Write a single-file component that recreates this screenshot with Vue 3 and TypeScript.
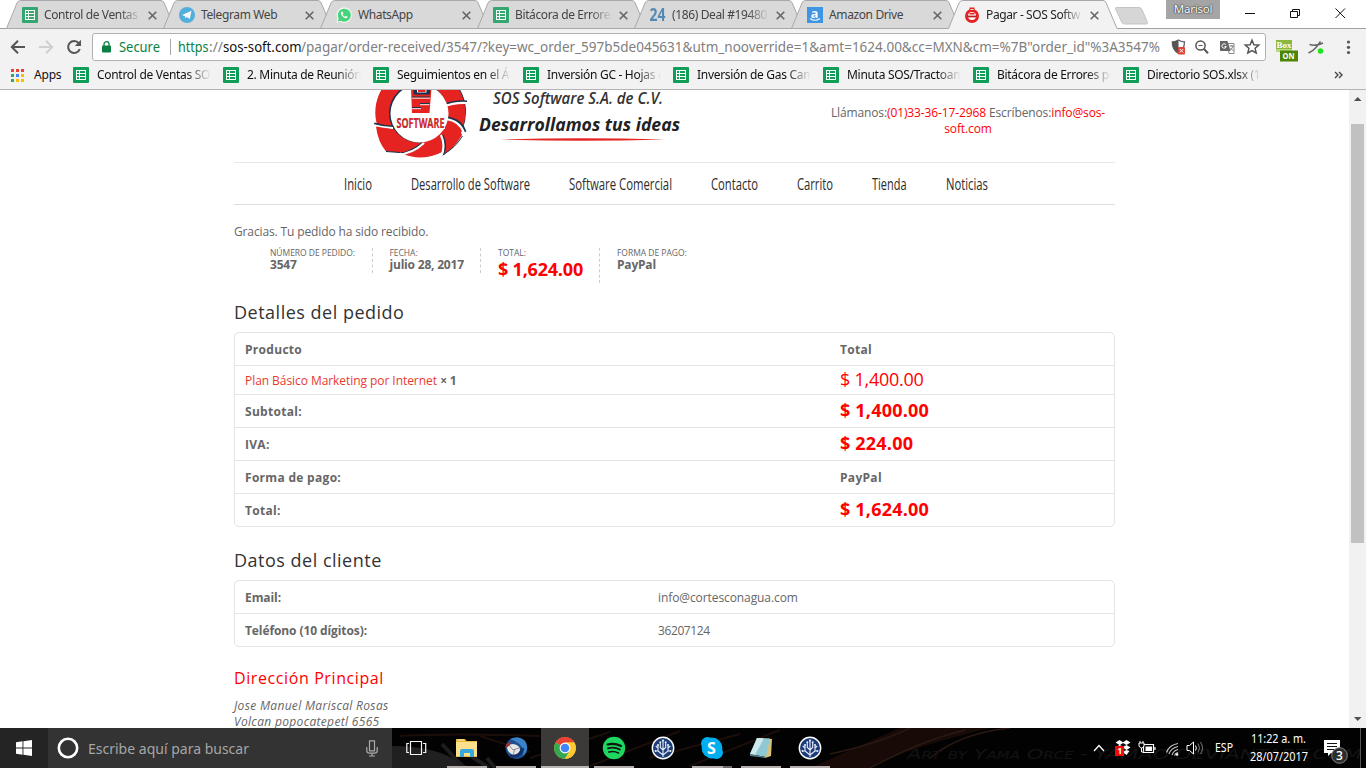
<script setup lang="ts">
import { h } from 'vue'

interface Tab { title: string; icon: string; active?: boolean; fade?: boolean }

const tabs: Tab[] = [
  { title: 'Control de Ventas', icon: 'sheet', fade: true },
  { title: 'Telegram Web', icon: 'telegram' },
  { title: 'WhatsApp', icon: 'whatsapp' },
  { title: 'Bitácora de Errores', icon: 'sheet', fade: true },
  { title: '(186) Deal #19480', icon: 'b24', fade: true },
  { title: 'Amazon Drive', icon: 'amazon' },
  { title: 'Pagar - SOS Softw', icon: 'sos', active: true, fade: true },
]

const bookmarks: string[] = [
  'Control de Ventas SO',
  '2. Minuta de Reunión',
  'Seguimientos en el Á',
  'Inversión GC - Hojas d',
  'Inversión de Gas Cam',
  'Minuta SOS/Tractoan',
  'Bitácora de Errores po',
  'Directorio SOS.xlsx (1',
]

const nav: { label: string; w: number }[] = [
  { label: 'Inicio', w: 28 },
  { label: 'Desarrollo de Software', w: 119 },
  { label: 'Software Comercial', w: 103 },
  { label: 'Contacto', w: 47 },
  { label: 'Carrito', w: 36 },
  { label: 'Tienda', w: 34.5 },
  { label: 'Noticias', w: 42 },
]

const summary = [
  { label: 'Número de pedido:', value: '3547', w: 85.5 },
  { label: 'Fecha:', value: 'julio 28, 2017', w: 74.5 },
  { label: 'Total:', value: '$ 1,624.00', w: 85, money: true },
  { label: 'Forma de pago:', value: 'PayPal', w: 72 },
]

const totals = [
  { label: 'Subtotal:', value: '$ 1,400.00', money: true },
  { label: 'IVA:', value: '$ 224.00', money: true },
  { label: 'Forma de pago:', value: 'PayPal', money: false },
  { label: 'Total:', value: '$ 1,624.00', money: true },
]

const apps: { icon: string; state: string }[] = [
  { icon: 'explorer', state: 'open' },
  { icon: 'thunderbird', state: 'open' },
  { icon: 'chrome', state: 'active' },
  { icon: 'spotify', state: 'open' },
  { icon: 'tree', state: '' },
  { icon: 'skype', state: 'open multi' },
  { icon: 'notes', state: 'open' },
  { icon: 'tree', state: 'open' },
]

const dots = ['#ea4335', '#ea4335', '#ea4335', '#34a853', '#4285f4', '#fbbc05', '#34a853', '#fbbc05', '#fbbc05']

// A single line of text stretched or condensed to a fixed width.
const FitText = (props: { t: string; w: number; hgt: number; base: number }) =>
  h('svg', { width: props.w, height: props.hgt, style: { display: 'block', overflow: 'visible', flex: 'none' } }, [
    h('text', { x: 0, y: props.base, textLength: props.w, lengthAdjust: 'spacingAndGlyphs', fill: 'currentColor' }, props.t),
  ])
FitText.props = ['t', 'w', 'hgt', 'base']
</script>

<template>
  <div class="screen">
    <svg class="defs" width="0" height="0">
      <defs>
        <symbol id="sheet" viewBox="0 0 16 16">
          <rect width="16" height="16" rx="1" fill="#0f9d58" />
          <rect x="3" y="3" width="10" height="10" fill="#fff" />
          <path d="M4 4h2v2H4zM7 4h5v2H7zM4 7h2v2H4zM7 7h5v2H7zM4 10h2v2H4zM7 10h5v2H7z" fill="#0f9d58" />
        </symbol>
        <symbol id="tree" viewBox="0 0 24 24">
          <circle cx="12" cy="12" r="11.400" fill="#fff" />
          <circle cx="12" cy="12" r="10" fill="#1d3c78" />
          <g fill="none" stroke="#e6edf8" stroke-width="1.100">
            <path d="M12 21V4M12 19L7 15V10M12 19l5-4V10M12 14L9.300 11.500V7M12 14l2.700-2.500V7M7 15H4.500M17 15h2.500M7 12L4.800 10M17 12l2.200-2" />
          </g>
          <g fill="#e6edf8"><circle cx="12" cy="4.500" r="1.100" /><circle cx="7" cy="9" r="1.100" /><circle cx="17" cy="9" r="1.100" /><circle cx="9.300" cy="6.300" r="1" /><circle cx="14.700" cy="6.300" r="1" /><circle cx="4.500" cy="15" r=".9" /><circle cx="19.500" cy="15" r=".9" /></g>
        </symbol>
      </defs>
    </svg>

    <header class="chrome">
      <div class="strip">
        <div v-for="(tab, i) in tabs" :key="i" class="tab" :class="{ active: tab.active }">
          <svg class="shape" width="171" height="29" viewBox="0 0 171 29">
            <path class="fill" d="M0 29L0.500 28.500L11 3Q12.300 .5 14.500 .5H155Q157 .5 158.200 3L169 28.500L169.500 29Z" />
            <path class="edge" d="M0 28.500H.5L11 3Q12.300 .5 14.500 .5H155Q157 .5 158.200 3L169 28.500H170" />
            <path v-if="!tab.active" class="edge" d="M0 28.500H170" />
          </svg>
          <svg class="fav" width="16" height="16" viewBox="0 0 16 16">
            <use v-if="tab.icon === 'sheet'" href="#sheet" />
            <template v-else-if="tab.icon === 'telegram'">
              <circle cx="8" cy="8" r="8" fill="#35a6de" />
              <path d="M3 8l9.500-4.200L10.800 12 7.800 10 6.500 11.500 6 9.200z" fill="#fff" />
            </template>
            <template v-else-if="tab.icon === 'whatsapp'">
              <path d="M.5 15.800L1.600 11.800A7.600 7.600 0 1 1 4.500 14.700z" fill="#fff" />
              <path d="M1.800 14.600L2.700 11.500A6.500 6.500 0 1 1 5 13.800z" fill="#25d366" />
              <path d="M5.500 4.500c-1.400 1.100-.7 3 1.100 4.900s3.900 2.600 5 1.200l-.2-1-1.600-.8-.9.9C8 9.400 7 8.400 6.600 7.500l.8-.9-.7-1.900z" fill="#fff" />
            </template>
            <text v-else-if="tab.icon === 'b24'" x="-.5" y="13.500" class="b24" textLength="16" lengthAdjust="spacingAndGlyphs">24</text>
            <template v-else-if="tab.icon === 'amazon'">
              <rect width="16" height="16" fill="#1b87e6" />
              <text x="3.800" y="10.500" class="ama">a</text>
              <path d="M3 11.500Q8 15 13 11.500" fill="none" stroke="#fff" stroke-width="1.100" />
            </template>
            <template v-else>
              <circle cx="8" cy="9" r="5.500" fill="#fff" stroke="#e32424" stroke-width="3" />
              <path d="M5.500 .5h5v7h-5z" fill="#e32424" />
              <path d="M6.500 2.500h3M5.800 5.500h4" stroke="#fff" stroke-width=".8" />
              <path d="M4 9.500h8" stroke="#b22" stroke-width="1.800" />
            </template>
          </svg>
          <span class="ttl" :class="{ fade: tab.fade }">{{ tab.title }}</span>
          <svg class="x" width="9" height="9" viewBox="0 0 9 9"><path d="M.7 .7L8.300 8.300M8.300 .7L.7 8.300" /></svg>
        </div>
        <svg class="newtab" width="36" height="18" viewBox="0 0 36 18">
          <path d="M2.500 .5H25Q27 .5 27.800 2.300L33.500 15.500Q34 17 32.500 17H10.500Q8.500 17 7.800 15.300L1.500 1.800Q1 .5 2.500 .5Z" fill="#d6d6d6" stroke="#c4c4c4" />
        </svg>
        <span class="user">Marisol</span>
        <svg class="winbtns" width="110" height="20" viewBox="0 0 110 20">
          <path d="M6 13.500h10M51.500 11.500h7v6h-7zM53.500 11.500v-2h7v6h-2M96.500 8.500l9.500 9.500M106 8.500L96.500 18" fill="none" stroke="#111" />
        </svg>
      </div>

      <div class="toolbar">
        <svg class="navicons" width="92" height="32" viewBox="0 0 92 32">
          <path d="M25 18H12.500M18 11.800L11.800 18L18 24.200" fill="none" stroke="#555" stroke-width="2" />
          <path d="M39 18h12.500M46 11.800L52.200 18L46 24.200" fill="none" stroke="#d0d0d0" stroke-width="2" />
          <path d="M78.800 14.200A6 6 0 1 0 79.800 20" fill="none" stroke="#555" stroke-width="2" />
          <path d="M81 10.800V17h-6.200z" fill="#555" />
        </svg>
        <div class="omni">
          <svg width="9" height="12" viewBox="0 0 9 12"><rect y="4.500" width="9" height="7" rx=".8" fill="#0b8043" /><path d="M2 5V3a2.500 2.300 0 0 1 5 0v2" fill="none" stroke="#0b8043" stroke-width="1.300" /></svg>
          <FitText class="secure" t="Secure" :w="41" :hgt="20" :base="15" />
          <i class="sep"></i>
          <div class="url">
            <FitText class="green" t="https" :w="30.500" :hgt="20" :base="15" />
            <FitText t="://" :w="14" :hgt="20" :base="15" />
            <FitText class="black" t="sos-soft.com" :w="78.500" :hgt="20" :base="15" />
            <FitText t="/pagar/order-received/3547/?key=wc_order_597b5de045631&amp;utm_nooverride=1&amp;amt=1624.00&amp;cc=MXN&amp;cm=%7B&quot;order_id&quot;%3A3547%" :w="859" :hgt="20" :base="15" />
          </div>
          <svg class="omniicons" width="98" height="20" viewBox="0 0 98 20">
            <path d="M12.500 3Q9 5 6.300 4.800Q6 12.500 12.500 16.500Q18.500 12.500 18.500 4.800Q15.500 5 12.500 3Z" fill="#fff" stroke="#666" stroke-width="1.300" />
            <path d="M12.500 3Q9 5 6.300 4.800Q6 12.500 12.500 16.500Z" fill="#555" />
            <rect x="12" y="10" width="7" height="7.500" rx="1" fill="#db4437" /><path d="M13.800 12l3.400 3.500M17.200 12l-3.400 3.500" stroke="#fff" />
            <circle cx="34.500" cy="8.500" r="4.600" fill="none" stroke="#555" stroke-width="1.500" /><path d="M37.800 11.800L42 16.200" stroke="#555" stroke-width="2" /><path d="M32.500 8.500h4" stroke="#555" />
            <path d="M61.500 6.500h6.500v10h-5z" fill="#fff" stroke="#888" /><path d="M54 4h7.500l3 10H54z" fill="#666" />
            <path d="M59.800 7.500a2.200 2.200 0 1 0 .5 2H58.500" fill="none" stroke="#fff" /><path d="M63.500 9h4.500M65.800 8v1M67 9.200q-1 3-3 4M64.500 11l3 3" fill="none" stroke="#777" stroke-width=".9" />
            <path d="M86 3.200L87.900 7.700L92.800 8.100L89.100 11.300L90.200 16L86 13.500L81.800 16L82.900 11.300L79.200 8.100L84.100 7.700Z" fill="none" stroke="#555" stroke-width="1.500" />
          </svg>
        </div>
        <svg class="ext" width="100" height="33" viewBox="0 0 100 33">
          <rect x="10" y="11" width="16" height="11" fill="#8cb63c" /><path d="M10 20h16v3H10z" fill="#b9d886" />
          <text x="10.500" y="19" class="box" textLength="15" lengthAdjust="spacingAndGlyphs">Box</text>
          <rect x="14" y="21.500" width="18" height="11" fill="#4c8500" />
          <text x="16.500" y="30" class="on" textLength="12" lengthAdjust="spacingAndGlyphs">ON</text>
          <path d="M43.500 15.500Q50 17.500 57 14M54.500 12.500L50 18.500Q47 22 42.500 24" fill="none" stroke="#666" stroke-width="1.500" />
          <circle cx="54.500" cy="22" r="2.700" fill="#1de21d" />
          <g fill="#555"><circle cx="82.500" cy="13" r="1.600" /><circle cx="82.500" cy="18.300" r="1.600" /><circle cx="82.500" cy="23.500" r="1.600" /></g>
        </svg>
      </div>

      <div class="bookmarks">
        <svg width="13" height="13" viewBox="0 0 13 13"><rect v-for="(c, i) in dots" :key="i" :x="(i % 3) * 5" :y="Math.floor(i / 3) * 5" width="3" height="3" :fill="c" /></svg>
        <span class="apps">Apps</span>
        <div v-for="b in bookmarks" :key="b" class="bm"><svg width="16" height="16"><use href="#sheet" /></svg><span>{{ b }}</span></div>
        <svg class="more" width="10" height="8" viewBox="0 0 10 8"><path d="M1 1l3 3-3 3M5 1l3 3-3 3" fill="none" stroke="#444" stroke-width="1.400" /></svg>
      </div>
    </header>

    <div class="view">
      <main>
        <div class="head">
          <svg class="logo" width="310" height="72" viewBox="373 90 310 72">
            <circle cx="421" cy="112" r="45" fill="#17334d" />
            <circle cx="420.300" cy="112.500" r="45" fill="#e52421" />
            <circle cx="418.500" cy="113" r="29.500" fill="#17334d" />
            <g fill="none" stroke="#17334d" stroke-width="3">
              <path d="M374 124Q383 127 393 127M398 153.500Q412 153 423 143M443 157Q447 146 442 135M465 132Q461 120 447 118M467 102Q455 101 442 106" />
            </g>
            <g fill="none" stroke="#fff" stroke-width="2.200">
              <path d="M373 125Q383 128 393 128M398 154.500Q412 154 424 143M441 157Q446 146 441 135M464 133Q460 121 446 119M467 103Q455 102 442 107" />
            </g>
            <path d="M373 137L386 152.500H400L407 156V162H372zM467 133Q456 149 442 156L438 162H470z" fill="#fff" />
            <path d="M376 126.500L391 129Q396 140 408 143Q412 144 417 143Q411 152 400 152.500L386 151.500Q378 142 376 126.500Z" fill="#e52421" />
            <path d="M444 154Q449 144 445 134L452 123Q460 127 462 135Q454 149 444 154Z" fill="#e52421" />
            <path d="M444 154Q455 148 462.500 136M386 151.500L400 152.500" fill="none" stroke="#17334d" />
            <circle cx="419.500" cy="113.500" r="29" fill="#fff" />
            <path d="M411 88h20.500l-2 25h-17.500z" fill="#e52421" />
            <path d="M413.500 88h16.500v6.500h-16.500z" fill="#17334d" /><path d="M417 88h9.500v4.500h-9.500z" fill="#fff" /><path d="M418 88h7.500v4h-7.500z" fill="#e52421" />
            <path d="M412 97h18M420 103.500h9.500M412 107.500h9" stroke="#17334d" />
            <path d="M412 98.200h18M420 104.700h9.500M412 108.700h9" stroke="#fff" stroke-width=".9" />
            <path d="M396 117h49v12h-49z" fill="#fff" />
            <text x="396.500" y="127.500" class="lsoft" textLength="48" lengthAdjust="spacingAndGlyphs">SOFTWARE</text>
            <text x="493" y="103.500" class="l1" textLength="170" lengthAdjust="spacingAndGlyphs">SOS Software S.A. de C.V.</text>
            <text x="479" y="131" class="l2" textLength="201" lengthAdjust="spacingAndGlyphs">Desarrollamos tus ideas</text>
            <path d="M500 139.500Q580 137 665 139.500Q580 142 500 139.500" fill="#e32724" />
          </svg>
          <p class="contact">Llámanos:<a>(01)33-36-17-2968</a> Escríbenos:<a>info@sos-<br />soft.com</a></p>
        </div>
        <nav class="menu"><FitText v-for="n in nav" :key="n.label" :t="n.label" :w="n.w" :hgt="20" :base="16.300" /></nav>

        <p class="thanks">Gracias. Tu pedido ha sido recibido.</p>
        <ul class="summary">
          <li v-for="s in summary" :key="s.label" :style="{ width: s.w + 'px' }">
            <span>{{ s.label }}</span><strong :class="{ money: s.money }">{{ s.value }}</strong>
          </li>
        </ul>

        <h2>Detalles del pedido</h2>
        <div class="table order">
          <div class="row"><b>Producto</b><b>Total</b></div>
          <div class="row item"><div><a>Plan Básico Marketing por Internet</a> <b class="qty">× 1</b></div><span class="price">$ 1,400.00</span></div>
          <div v-for="t in totals" :key="t.label" class="row"><b>{{ t.label }}</b><b :class="{ price: t.money }">{{ t.value }}</b></div>
        </div>

        <h2 class="second">Datos del cliente</h2>
        <div class="table client">
          <div class="row"><b>Email:</b><span>info@cortesconagua.com</span></div>
          <div class="row"><b>Teléfono (10 dígitos):</b><span class="num">36207124</span></div>
        </div>
        <h3>Dirección Principal</h3>
        <address>Jose Manuel Mariscal Rosas<br />Volcan popocatepetl 6565</address>
      </main>
      <div class="scroll">
        <svg width="17" height="34" viewBox="0 0 17 34"><path d="M5 11h7.500L8.700 7z" fill="#505050" /></svg>
        <div class="thumb"></div>
        <svg class="down" width="17" height="17" viewBox="0 0 17 17"><path d="M5 6h7.500L8.700 10z" fill="#505050" /></svg>
      </div>
    </div>

    <footer class="taskbar">
      <svg class="wall" width="1366" height="40" viewBox="0 0 1366 40">
        <rect width="1366" height="40" fill="#030202" />
        <path d="M392 18Q430 18 452 30L470 40H392z" fill="#202020" />
        <path d="M442 16l22 24M465 24l24 16M487 30l8 10" stroke="#1d1d1d" stroke-width="4" />
        <path d="M400 8Q450 5 540 8M530 30L610 4M590 38L680 3M650 30L740 6M690 38L780 2M480 8L530 24" fill="none" stroke="#1b0e09" stroke-width="2" />
        <path d="M810 40L900 0H990Q900 22 870 40Z" fill="#180b07" />
        <path d="M830 26Q880 15 910 0M870 40Q920 13 965 2M930 30Q960 5 1010 0" fill="none" stroke="#2a1912" stroke-width="1.500" />
        <text x="907" y="31" class="art" textLength="455" lengthAdjust="spacingAndGlyphs">Art by Yama Orce - YAMAO.DEVIANTART.COM</text>
      </svg>
      <div class="start"><svg width="16" height="16" viewBox="0 0 16 16"><path d="M0 2.200L6.500 1.300V7.500H0zM7.400 1.200L16 0V7.500H7.400zM0 8.400H6.500V14.700L0 13.800zM7.400 8.400H16V16L7.400 14.800z" fill="#fff" /></svg></div>
      <div class="search">
        <svg width="22" height="22" viewBox="0 0 22 22"><circle cx="11" cy="11" r="9.200" fill="none" stroke="#fff" stroke-width="2.600" /></svg>
        <FitText t="Escribe aquí para buscar" :w="161" :hgt="20" :base="15.500" />
        <svg class="mic" width="12" height="17" viewBox="0 0 12 17"><path d="M3.500 .8h5v10h-5zM.8 7v3.500q0 2.700 2.700 2.700h5q2.700 0 2.700-2.700V7M6 13v3M3 16h6" fill="none" stroke="#aaa" stroke-width="1.200" /></svg>
      </div>
      <div class="tv"><svg width="21" height="14" viewBox="0 0 21 14"><path d="M4.500 .5h11v13h-11zM3 2.500H.8v9H3M17 2.500h2.700v9H17" fill="none" stroke="#f4f4f4" stroke-width="1.200" /></svg></div>
      <div class="pins">
        <div v-for="(a, i) in apps" :key="i" class="pin" :class="a.state">
          <svg width="24" height="24" viewBox="0 0 24 24">
            <template v-if="a.icon === 'explorer'">
              <path d="M1 3h9l1.500 2H22v16H1z" fill="#e9b93f" /><path d="M1 6h21v14H1z" fill="#fbe08b" /><path d="M3 4h6" stroke="#fff3c0" /><path d="M5 21v-6q0-2 2-2h10q2 0 2 2v6h-4v-4H9v4z" fill="#35a7dc" />
            </template>
            <template v-else-if="a.icon === 'thunderbird'">
              <circle cx="12.500" cy="12" r="10.800" fill="#1b4f91" /><path d="M6 3Q15-1 21 5Q26 13 19 20Q21 12 14 7Q10 4 6 3" fill="#3b83c6" /><path d="M3 12Q4 8 9 8Q16 9 16 14Q14 20 9 19Q4 17 3 12" fill="#e9e7e4" /><path d="M5 9L9 14L15 12M9 19l2-6" fill="none" stroke="#8d8f98" /><path d="M1 12Q2 7 7 6L5 10z" fill="#a9302a" /><path d="M6 20Q16 22 19 12" fill="none" stroke="#12306a" stroke-width="3" />
            </template>
            <template v-else-if="a.icon === 'chrome'">
              <circle cx="12" cy="12" r="10.800" fill="#fcc934" />
              <path d="M12 12L2.600 6.600A10.800 10.800 0 0 1 21.400 6.600H12z" fill="#ea4335" />
              <path d="M12 12L2.600 6.600A10.800 10.800 0 0 0 12 22.800L16.700 14.700z" fill="#34a853" />
              <path d="M12 6.600h9.400A10.800 10.800 0 0 1 12 22.800L16.700 14.700z" fill="#fcc934" />
              <circle cx="12" cy="12" r="5.400" fill="#fff" /><circle cx="12" cy="12" r="4.300" fill="#4285f4" />
            </template>
            <template v-else-if="a.icon === 'spotify'">
              <circle cx="12" cy="12" r="11.200" fill="#1ed760" /><g fill="none" stroke="#101510" stroke-linecap="round"><path d="M5.500 8.500Q12.500 6.500 19 10" stroke-width="2.200" /><path d="M6 12.300Q12.500 10.500 17.800 13.500" stroke-width="1.900" /><path d="M6.800 16Q12 14.500 16.500 17" stroke-width="1.600" /></g>
            </template>
            <template v-else-if="a.icon === 'skype'">
              <circle cx="7.500" cy="7.500" r="6.500" fill="#00aff0" /><circle cx="16.500" cy="16.500" r="6.500" fill="#00aff0" /><circle cx="12" cy="12" r="10.400" fill="#00aff0" /><text x="7" y="18" class="sk">S</text>
            </template>
            <template v-else-if="a.icon === 'notes'">
              <path d="M8 2L23 3L22 20L16 22z" fill="#d8c27b" /><path d="M8 2L21 2.500L17 21L1 18z" fill="#8fc7d3" /><path d="M8 2L15 2.300L6 19L1 18z" fill="#cfe8ec" /><path d="M1 18L17 21L16 22L1 20z" fill="#517c86" />
            </template>
            <use v-else href="#tree" />
          </svg>
        </div>
      </div>
      <div class="tray">
        <svg width="120" height="40" viewBox="1086 0 120 40">
          <path d="M1094 23l5-5.500 5 5.500" fill="none" stroke="#fff" stroke-width="1.300" />
          <g transform="translate(9.500 0)">
            <path d="M1106 14.500l4-2.500 3.500 2.300 3.500-2.300 4 2.500-4 2.500 4 2.500-4 2.500-3.500-2.500-3.500 2.500-4-2.500 4-2.500zM1113 24l4-2 3 1-3 4z" fill="#fff" /><path d="M1110.500 17l3-2 3.500 2-3.500 2z" fill="#111" />
            <rect x="1105.500" y="18" width="9" height="10" fill="#f00b0b" /><text x="1108" y="26" class="one">1</text>
            <path d="M1134 16.500h10v8h-10zM1145.500 19v3" fill="none" stroke="#fff" stroke-width="1.200" /><path d="M1136 18.500h6.500v4.500h-6.500z" fill="#fff" /><path d="M1129.500 15h5v3q-1 2-2.500 2t-2.500-2zM1130.500 13v2M1133.500 13v2M1132 20v4h2" fill="#000" stroke="#fff" />
          </g>
          <g fill="none" stroke="#c8c8c8" stroke-width="1.100"><path d="M1166.500 24.500Q1169 17 1178 15.500M1169 26Q1171 20 1178 18.500M1172 27Q1173.500 22.500 1178 21.500M1174.500 27.500Q1175.500 25 1178 24.500" /></g><circle cx="1177" cy="26.500" r="1.300" fill="#fff" />
          <g transform="translate(11.500 0)"><path d="M1175.500 17.500h2.500l4-3.500v12l-4-3.500h-2.500z" fill="none" stroke="#fff" /><path d="M1184 17.500q1.700 2.500 0 5" fill="none" stroke="#fff" /><path d="M1186.500 15.500q3 4.500 0 9M1189 14q4 6 0 12" fill="none" stroke="#777" /></g>
        </svg>
        <FitText class="esp" t="ESP" :w="18" :hgt="40" :base="24" />
        <div class="clock">
          <FitText t="11:22 a. m." :w="55" :hgt="18" :base="13" />
          <FitText t="28/07/2017" :w="58" :hgt="18" :base="13" />
        </div>
        <svg class="notif" width="40" height="40" viewBox="1322 0 40 40">
          <path d="M1325 12h16v13h-9l-3 3v-3h-4z" fill="#fff" /><path d="M1328 15.500h10M1328 18.500h10M1328 21.500h7" stroke="#111" />
          <circle cx="1340.500" cy="27.500" r="7.800" fill="#2c2c2c" stroke="#858585" /><text x="1337" y="32" class="three">3</text>
          <path d="M1361.500 0v40" stroke="#555" />
        </svg>
      </div>
    </footer>
  </div>
</template>

<style>
html, body { margin: 0; overflow: hidden; background: #fff; }
</style>

<style scoped>
* { box-sizing: border-box; }
.screen { width: 1366px; height: 768px; display: flex; flex-direction: column; overflow: hidden; font-family: "Open Sans", "Noto Sans", sans-serif; background: #fff; }
.defs { position: absolute; }
p, h2, h3, ul { margin: 0; padding: 0; font-weight: 400; }

.chrome { height: 90px; flex: none; background: #f2f2f2; border-bottom: 1px solid #b5b3b5; font-family: "Noto Sans", "Open Sans", sans-serif; font-size: 12px; }
.strip { height: 29px; display: flex; padding-left: 6px; background: #fff; box-shadow: inset 0 -1px #a2a0a2; }
.tab { position: relative; width: 157px; height: 29px; flex: none; display: flex; align-items: center; padding: 1px 0 0 16px; color: #444; }
.shape { position: absolute; left: 0; top: 0; }
.fill { fill: #d9d9d9; }
.edge { fill: none; stroke: #a9a7a9; }
.active { z-index: 2; color: #222; }
.active .fill { fill: #f2f2f2; }
.fav { position: relative; flex: none; overflow: visible; opacity: .82; }
.active .fav { opacity: 1; }
.b24 { font: bold 17px "Open Sans", sans-serif; fill: #3878ad; }
.ama { font: bold 13px "Open Sans", sans-serif; fill: #fff; }
.ttl { position: relative; width: 97px; margin-left: 6px; white-space: nowrap; line-height: 18px; letter-spacing: -.38px; }
.ttl.fade { mask-image: linear-gradient(90deg, #000 78%, transparent 100%); }
.x { position: relative; margin-left: 7px; }
.x path { stroke: #666; stroke-width: 1.600; }
.newtab { margin: 7px 0 0 9px; flex: none; }
.user { width: 54px; height: 19px; margin-left: 16px; background: #a5a5a5; color: #fff; text-align: center; line-height: 17px; font-size: 11.500px; letter-spacing: -.2px; text-shadow: 0 0 2px #222, 0 0 1px #222; }
.winbtns { margin-left: 19px; flex: none; }
.toolbar { height: 32px; display: flex; }
.navicons, .ext { flex: none; }
.omni { width: 1174px; height: 28px; margin-top: 4px; border: 1px solid #b2b0b2; border-radius: 3px; background: #fff; display: flex; align-items: center; padding-left: 9px; flex: none; font-size: 14px; color: #808080; }
.secure { margin-left: 8px; color: #0b8043; }
.sep { width: 1px; height: 16px; background: #aaa; margin: 0 7px 0 10px; }
.url { display: flex; width: 982px; }
.green { color: #0b8043; }
.black { color: #111; }
.omniicons { flex: none; margin-left: 6px; }
.box { font: bold 9px "Liberation Serif", serif; fill: #fff; }
.on { font: bold 8.500px "Open Sans", sans-serif; fill: #fff; }
.bookmarks { height: 28px; display: flex; align-items: center; padding-left: 11px; color: #111; }
.apps { width: 28px; margin: 0 11px 0 10px; letter-spacing: -.2px; line-height: 18px; padding-bottom: 1px; }
.bm { width: 150px; display: flex; align-items: center; flex: none; }
.bm span { width: 115px; margin-left: 8px; white-space: nowrap; mask-image: linear-gradient(90deg, #000 78%, transparent 99%); line-height: 18px; padding-bottom: 1px; letter-spacing: -.3px; }
.more { margin-left: 61px; }

.view { height: 638px; display: flex; flex: none; overflow: hidden; color: #666; font-size: 12px; }
main { width: 881px; margin-left: 234px; flex: none; }
.head { height: 73px; display: flex; border-bottom: 1px solid #e8e8e8; }
.logo { margin-left: 139px; flex: none; }
.lsoft { font: bold 13.500px "Open Sans", sans-serif; fill: #e52421; stroke: #17334d; stroke-width: .2; }
.l1 { font: italic 600 15.500px "Open Sans", sans-serif; fill: #333; }
.l2 { font: italic 700 18px "Open Sans", sans-serif; fill: #222; }
.contact { width: 300px; margin: 15px 0 0 138px; text-align: center; line-height: 16px; white-space: nowrap; letter-spacing: -.12px; }
.contact a { color: #f00; }
.menu { height: 42px; display: flex; justify-content: center; align-items: center; gap: 39px; padding-right: 17.500px; border-bottom: 1px solid #ddd; font: 17px "Open Sans", sans-serif; color: #2c2c2c; }
.thanks { margin-top: 18px; line-height: 18px; letter-spacing: -.13px; }
.summary { display: flex; align-items: flex-start; height: 36px; margin: 7px 0 0 36px; list-style: none; }
.summary li { box-sizing: content-box; padding-right: 16px; margin-right: 17px; border-right: 1px dashed #ccc; white-space: nowrap; }
.summary li:last-child { border: 0; }
.summary span { display: block; font-size: 8.500px; line-height: 9px; text-transform: uppercase; letter-spacing: -.03px; }
.summary strong { display: block; line-height: 16px; letter-spacing: -.2px; }
.summary .money { color: #f00; font-size: 18px; line-height: 24px; padding-bottom: 2px; }
h2 { margin-top: 16px; font-size: 18px; line-height: 24px; letter-spacing: .5px; color: #333; }
.table { margin-top: 8px; border: 1px solid #e4e4e4; border-radius: 5px; }
.row { height: 33px; display: grid; align-items: center; padding: 0 0 0 10px; border-top: 1px solid #e4e4e4; letter-spacing: .3px; }
.row:first-child { border-top: 0; height: 32px; }
.order .row { grid-template-columns: 595px 1fr; }
.client .row { grid-template-columns: 413px 1fr; letter-spacing: -.09px; }
.client .num { letter-spacing: -.4px; }
.row.item { height: 29px; }
.item a { color: #e8392f; letter-spacing: -.06px; }
.qty { letter-spacing: -.3px; }
.price { color: #f00; font-size: 18px; line-height: 22px; padding-bottom: 2px; letter-spacing: .2px; }
.item .price { letter-spacing: -.25px; }
h2.second { margin-top: 21px; }
h3 { margin-top: 19px; font-size: 16px; line-height: 24px; letter-spacing: .6px; color: #f00; }
address { margin-top: 8px; line-height: 16px; letter-spacing: .33px; }
.scroll { width: 17px; margin-left: 234px; background: #f1f1f1; display: flex; flex-direction: column; flex: none; }
.thumb { width: 13px; height: 419px; margin-left: 2px; background: #c1c1c1; }
.down { margin-top: auto; }

.taskbar { position: relative; height: 40px; display: flex; flex: none; font-family: "Noto Sans", sans-serif; color: #fff; }
.wall { position: absolute; left: 0; top: 0; }
.art { font: italic small-caps 14px "DejaVu Sans", sans-serif; fill: #131313; }
.start, .search, .tv, .pins, .tray { position: relative; display: flex; flex: none; }
.start { width: 48px; background: #242424; align-items: center; justify-content: center; }
.search { width: 344px; background: #333; align-items: center; padding-left: 9px; gap: 9px; color: #a6a6a6; font-size: 15px; }
.mic { margin-left: 108px; }
.tv { width: 51px; align-items: center; justify-content: center; padding-right: 3px; }
.pins { gap: 1px; }
.pin { width: 48px; height: 40px; display: flex; align-items: center; justify-content: center; }
.pin.open { background: linear-gradient(#b3aeab, #b3aeab) 50% 100% / 40px 2px no-repeat; }
.pin.multi { background: linear-gradient(90deg, #b3aeab 31px, #6e6a68 31px) 50% 100% / 40px 2px no-repeat; }
.pin.active { background: #3c3a39; border-bottom: 2px solid #b9b5b2; padding-top: 2px; }
.sk { font: bold 16px "Open Sans", sans-serif; fill: #fff; }
.tray { margin-left: 252px; font-size: 12px; }
.one { font: bold 8px "Open Sans", sans-serif; fill: #fff; }
.three { font: 600 12px "Open Sans", sans-serif; fill: #fff; }
.esp { margin-left: 9px; }
.clock { display: flex; flex-direction: column; align-items: center; margin: 2px 13.500px 0 16.500px; }
</style>
